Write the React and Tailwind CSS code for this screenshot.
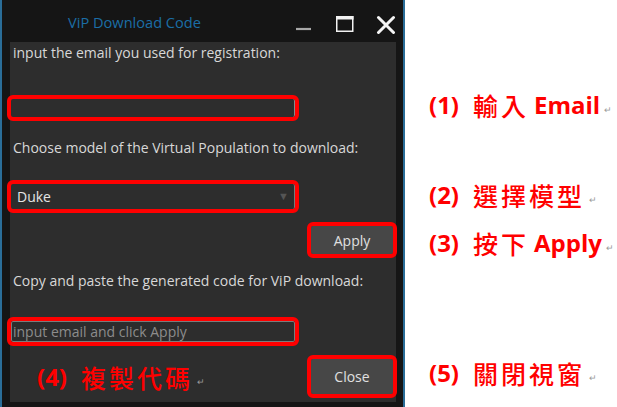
import React from "react";

const ui = { fontFamily: '"Open Sans", "Noto Sans", sans-serif' };
const cjk = { fontFamily: '"Noto Sans CJK TC", "Noto Sans CJK SC", sans-serif' };

function Note({ num, zh, en, className = "" }) {
  return (
    <div className={"flex items-center h-[30px] text-[#ff0000] whitespace-nowrap " + className}>
      <span className="text-[24px] font-bold leading-[30px]" style={ui}>
        {num}
      </span>
      <span className="ml-[14px] text-[25px] tracking-[3px] font-medium leading-[30px]" style={cjk}>
        {zh}
      </span>
      {en && (
        <span className="ml-[5px] text-[24px] font-bold leading-[30px]" style={ui}>
          {en}
        </span>
      )}
      <span className="ml-[4px] mt-[10px] text-[9px] text-[#9a9a9a]">↵</span>
    </div>
  );
}

export default function App() {
  return (
    <div className="w-[617px] h-[407px] bg-white flex overflow-hidden" style={ui}>
      {/* WINDOW */}
      <div className="w-[405px] h-[407px] shrink-0 bg-[#151515] border-x-2 border-[#2a6d98] flex flex-col">
        {/* TITLE BAR */}
        <div className="h-[42px] flex items-start">
          <div className="pl-[66px] mt-[12px] text-[14.6px] leading-[20px] text-[#1b6ea6]">
            ViP Download Code
          </div>
          <div className="ml-auto mr-[7px] mt-[14px] flex gap-[21px]">
            <svg width="20" height="20" viewBox="0 0 20 20">
              <line x1="2" y1="15" x2="17" y2="15" stroke="#a8a8a8" strokeWidth="2.2" />
            </svg>
            <svg width="20" height="20" viewBox="0 0 20 20">
              <rect x="1.75" y="2.75" width="16" height="14.5" fill="none" stroke="#f2f2f2" strokeWidth="1.5" />
              <rect x="1" y="2" width="17.5" height="3.5" fill="#f2f2f2" />
            </svg>
            <svg width="20" height="20" viewBox="0 0 20 20">
              <path d="M2.5 3.5 L17.5 18.5 M17.5 3.5 L2.5 18.5" stroke="#f5f5f5" strokeWidth="3" strokeLinecap="round" />
            </svg>
          </div>
        </div>

        {/* CONTENT */}
        <div className="ml-[8px] mr-[7px] h-[360px] bg-[#2d2d2d] flex flex-col text-[14px] text-[#d8d8d8]">
          <div className="mt-[2px] h-[18px] leading-[18px] pl-[3px]">
            input the email you used for registration:
          </div>
          <div className="mt-[37px] ml-[1px] w-[284px] h-[18px] border-r border-[#8a8a8a] outline-[4px] outline-[#ff0000] rounded-[2px]" />

          <div className="mt-[22px] h-[18px] leading-[18px] pl-[3px]">
            Choose model of the Virtual Population to download:
          </div>
          <div className="mt-[27px] ml-[1px] w-[284px] h-[25px] border-r border-[#7a7a7a] outline-[4px] outline-[#ff0000] rounded-[2px] flex items-center pl-[6px] pr-[5px]">
            <span className="text-[14px] text-[#e4e4e4]">Duke</span>
            <span className="ml-auto text-[11px] text-[#555555]">▼</span>
          </div>

          <div className="mt-[17px] flex justify-end pr-[3px]">
            <button className="w-[82px] h-[28px] bg-[#474747] text-[14px] text-[#e0e0e0] outline-[4px] outline-[#ff0000] rounded-[2px]">
              Apply
            </button>
          </div>

          <div className="mt-[18px] h-[18px] leading-[18px] pl-[3px]">
            Copy and paste the generated code for ViP download:
          </div>
          <div className="mt-[31px] ml-[1px] w-[284px] h-[21px] border border-[#7c7c7c] outline-[4px] outline-[#ff0000] rounded-[2px] flex items-center pl-[1px] text-[14px] text-[#8c8c8c]">
            input email and click Apply
          </div>

          <div className="mt-[17px] flex items-center pr-[3px]">
            <Note num="(4)" zh="複製代碼" className="ml-[27px]" />
            <button className="ml-auto w-[82px] h-[35px] bg-[#474747] text-[14px] text-[#e0e0e0] outline-[4px] outline-[#ff0000] rounded-[2px]">
              Close
            </button>
          </div>
        </div>
      </div>

      {/* ANNOTATIONS */}
      <div className="flex flex-col pl-[24px]">
        <Note num="(1)" zh="輸入" en="Email" className="mt-[90px]" />
        <Note num="(2)" zh="選擇模型" className="mt-[60px]" />
        <Note num="(3)" zh="按下" en="Apply" className="mt-[18px]" />
        <Note num="(5)" zh="關閉視窗" className="mt-[100px]" />
      </div>
    </div>
  );
}
